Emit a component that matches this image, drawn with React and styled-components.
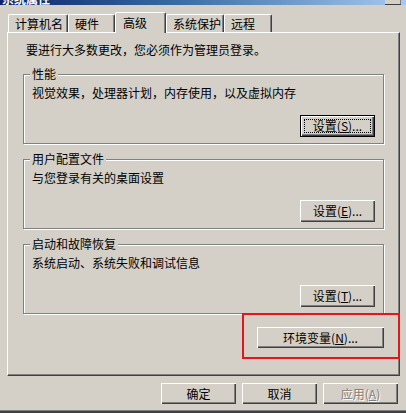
import React from 'react';
import styled, { createGlobalStyle } from 'styled-components';

const GlobalStyle = createGlobalStyle`
  html, body {
    margin: 0;
    padding: 0;
    background: #d4d0c8;
  }
  body {
    font-family: "Noto Sans CJK SC", "Liberation Sans", sans-serif;
    font-size: 12px;
    color: #000;
  }
`;

const tabs = [
  { label: '计算机名', w: 60 },
  { label: '硬件', w: 47 },
  { label: '高级', w: 51, active: true },
  { label: '系统保护', w: 58 },
  { label: '远程', w: 48 },
];

const groups = [
  { title: '性能', text: '视觉效果，处理器计划，内存使用，以及虚拟内存', key: 'S', focused: true },
  { title: '用户配置文件', text: '与您登录有关的桌面设置', key: 'E' },
  { title: '启动和故障恢复', text: '系统启动、系统失败和调试信息', key: 'T' },
];

export default function App() {
  return (
    <>
      <GlobalStyle />
      <Window>
        <TitleBar>
          <TitleText>系统属性</TitleText>
          <CloseBox />
        </TitleBar>

        <TabStrip>
          {tabs.map((tab) => (
            <Tab key={tab.label} $w={tab.w} $active={tab.active}>
              {tab.label}
            </Tab>
          ))}
        </TabStrip>

        <Panel>
          <Intro>要进行大多数更改，您必须作为管理员登录。</Intro>
          {groups.map((g) => (
            <Group key={g.title}>
              <GroupLabel>{g.title}</GroupLabel>
              <GroupText>{g.text}</GroupText>
              <ButtonRow>
                <Button $w={75} $h={22} $focused={g.focused}>
                  设置(<u>{g.key}</u>)...
                </Button>
              </ButtonRow>
            </Group>
          ))}
          <EnvRow>
            <Button $w={127} $h={21}>
              环境变量(<u>N</u>)...
            </Button>
          </EnvRow>
        </Panel>

        <Footer>
          <Button $w={75} $h={21}>确定</Button>
          <Button $w={75} $h={21}>取消</Button>
          <Button $w={75} $h={21} $disabled>
            应用(<u>A</u>)
          </Button>
        </Footer>

        <BottomEdge />
        <Highlight />
      </Window>
    </>
  );
}

const Window = styled.div`
  position: relative;
  width: 406px;
  height: 413px;
  display: flex;
  flex-direction: column;
  overflow: hidden;
`;

const TitleBar = styled.div`
  height: 5px;
  flex-shrink: 0;
  display: flex;
  align-items: flex-end;
  justify-content: space-between;
  overflow: hidden;
  background: linear-gradient(to right, #0a246a, #3a6ea5 45%, #a6caf0);
`;

const TitleText = styled.div`
  color: #fff;
  font-weight: bold;
  line-height: 12px;
  padding-left: 2px;
  flex-shrink: 0;
`;

const CloseBox = styled.div`
  width: 16px;
  height: 4px;
  margin-right: 5px;
  background: #d4d0c8;
  border-bottom: 1px solid #404040;
  box-shadow: inset -1px 0 #808080;
`;

const TabStrip = styled.div`
  display: flex;
  align-items: flex-end;
  height: 20px;
  margin-top: 7px;
  padding-left: 8px;
  position: relative;
  z-index: 1;
`;

const Tab = styled.div`
  box-sizing: border-box;
  width: ${(p) => p.$w}px;
  height: ${(p) => (p.$active ? 21 : 18)}px;
  margin-bottom: ${(p) => (p.$active ? -1 : 0)}px;
  padding-left: ${(p) => (p.$active ? 7 : 6)}px;
  padding-top: ${(p) => (p.$active ? 3 : 2)}px;
  line-height: 13px;
  white-space: nowrap;
  background: #d4d0c8;
  border-top: 1px solid #fff;
  border-left: 1px solid #fff;
  border-right: 1px solid #404040;
  box-shadow: inset -1px 0 #808080;
  border-top-left-radius: 2px;
  border-top-right-radius: 2px;
`;

const Panel = styled.div`
  box-sizing: border-box;
  width: 393px;
  height: 344px;
  margin-left: 7px;
  padding: 11px 15px 0 15px;
  border-top: 1px solid #fff;
  border-left: 1px solid #fff;
  border-right: 1px solid #404040;
  border-bottom: 1px solid #404040;
  box-shadow: inset -1px -1px #808080;
  flex-shrink: 0;
`;

const Intro = styled.div`
  line-height: 12px;
  padding-left: 3px;
  margin-bottom: 18px;
`;

const Group = styled.div`
  box-sizing: border-box;
  height: 70px;
  padding: 0 8px;
  border: 1px solid #808080;
  box-shadow: 1px 1px 0 #fff, inset 1px 1px 0 #fff;
  & + & {
    margin-top: 15px;
  }
`;

const GroupLabel = styled.div`
  width: fit-content;
  margin: -7px 0 0 -2px;
  padding: 0 2px;
  line-height: 12px;
  background: #d4d0c8;
`;

const GroupText = styled.div`
  margin-top: 7px;
  line-height: 12px;
`;

const ButtonRow = styled.div`
  display: flex;
  justify-content: flex-end;
  margin-top: 16px;
`;

const EnvRow = styled.div`
  display: flex;
  justify-content: flex-end;
  margin-top: 13px;
`;

const Button = styled.button`
  position: relative;
  box-sizing: border-box;
  width: ${(p) => p.$w}px;
  height: ${(p) => p.$h}px;
  padding: 0;
  font-family: inherit;
  font-size: 12px;
  line-height: 12px;
  white-space: nowrap;
  background: #d4d0c8;
  color: ${(p) => (p.$disabled ? '#808080' : '#000')};
  text-shadow: ${(p) => (p.$disabled ? '1px 1px 0 #fff' : 'none')};
  border: ${(p) => (p.$focused ? '1px solid #000' : 'none')};
  box-shadow: inset 1px 1px #fff, inset -1px -1px #404040, inset -2px -2px #808080;
  u {
    text-decoration: underline;
  }
  ${(p) =>
    p.$focused &&
    `
    &::after {
      content: '';
      position: absolute;
      inset: 3px;
      border: 1px dotted #000;
    }
  `}
`;

const Footer = styled.div`
  display: flex;
  justify-content: flex-end;
  gap: 6px;
  margin-top: 7px;
  padding-right: 8px;
`;

const BottomEdge = styled.div`
  margin-top: auto;
  height: 2px;
  border-top: 1px solid #808080;
  background: #404040;
`;

const Highlight = styled.div`
  position: absolute;
  left: 242px;
  top: 313px;
  width: 158px;
  height: 46px;
  box-sizing: border-box;
  border: 2px solid #e8141c;
  pointer-events: none;
`;
